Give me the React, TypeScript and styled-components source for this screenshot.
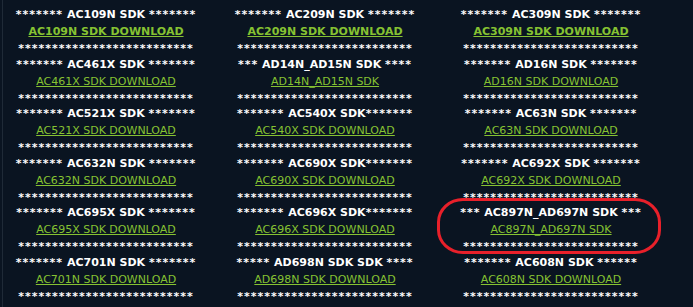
import styled, { createGlobalStyle } from 'styled-components';

const GlobalStyle = createGlobalStyle`
    html, body {
        margin: 0;
        padding: 0;
        background: #0a1421;
    }
`;

const Page = styled.div`
    position: relative;
    width: 693px;
    height: 307px;
    overflow: hidden;
    background: #0a1421;
    font-family: "DejaVu Sans", Verdana, sans-serif;
    font-size: 11px;
`;

const Frame = styled.div`
    margin-left: 2px;
    border-left: 1px solid #1f2a37;
    height: 100%;
    box-sizing: border-box;
    padding-top: 7px;
`;

const Grid = styled.div`
    display: grid;
    grid-template-columns: 206px 232px 220px;
`;

const Cell = styled.div`
    display: flex;
    flex-direction: column;
    align-items: center;
    white-space: pre;
`;

const Title = styled.div`
    color: #ffffff;
    font-weight: bold;
    line-height: 16px;
`;

const Asterisks = styled.span`
    letter-spacing: 1px;
`;

const Link = styled.a<{ $bold?: boolean }>`
    color: #86c232;
    font-weight: ${(p) => (p.$bold ? 'bold' : 'normal')};
    line-height: 18px;
    text-decoration: underline;
    cursor: pointer;
`;

const Stars = styled.div`
    color: #ffffff;
    font-weight: bold;
    letter-spacing: 1px;
    line-height: 15.6px;
`;

const Marker = styled.div`
    position: absolute;
    left: 437px;
    top: 198px;
    width: 224px;
    height: 56px;
    box-sizing: border-box;
    border: 3px solid #e8202a;
    border-radius: 26px / 24px;
    pointer-events: none;
`;

type Sdk = { title: string; link: string; bold?: boolean };

const STAR_LINE = '**************************';

const rows: Sdk[][] = [
    [
        { title: '******* AC109N SDK *******', link: 'AC109N SDK DOWNLOAD', bold: true },
        { title: '******* AC209N SDK *******', link: 'AC209N SDK DOWNLOAD', bold: true },
        { title: '******* AC309N SDK *******', link: 'AC309N SDK DOWNLOAD', bold: true },
    ],
    [
        { title: '******* AC461X SDK *******', link: 'AC461X SDK DOWNLOAD' },
        { title: '*** AD14N_AD15N SDK ****', link: 'AD14N_AD15N SDK' },
        { title: '******* AD16N SDK *******', link: 'AD16N SDK DOWNLOAD' },
    ],
    [
        { title: '******* AC521X SDK *******', link: 'AC521X SDK DOWNLOAD' },
        { title: '******* AC540X SDK*******', link: 'AC540X SDK DOWNLOAD' },
        { title: '******* AC63N SDK *******', link: 'AC63N SDK DOWNLOAD' },
    ],
    [
        { title: '******* AC632N SDK *******', link: 'AC632N SDK DOWNLOAD' },
        { title: '******* AC690X SDK*******', link: 'AC690X SDK DOWNLOAD' },
        { title: '******* AC692X SDK *******', link: 'AC692X SDK DOWNLOAD' },
    ],
    [
        { title: '******* AC695X SDK *******', link: 'AC695X SDK DOWNLOAD' },
        { title: '******* AC696X SDK*******', link: 'AC696X SDK DOWNLOAD' },
        { title: '*** AC897N_AD697N SDK ***', link: 'AC897N_AD697N SDK' },
    ],
    [
        { title: '******* AC701N SDK *******', link: 'AC701N SDK DOWNLOAD' },
        { title: '***** AD698N SDK SDK ****', link: 'AD698N SDK DOWNLOAD' },
        { title: '******* AC608N SDK ******', link: 'AC608N SDK DOWNLOAD' },
    ],
];

// the star runs are drawn a little wider than the font gives them
function renderTitle(title: string) {
    return title.split(/(\*+)/).filter(Boolean).map((part, i) =>
        part.startsWith('*') ? <Asterisks key={i}>{part}</Asterisks> : part
    );
}

export default function App() {
    return (
        <Page>
            <GlobalStyle />
            <Frame>
                <Grid>
                    {rows.flat().map((sdk) => (
                        <Cell key={sdk.title}>
                            <Title>{renderTitle(sdk.title)}</Title>
                            <Link $bold={sdk.bold}>{sdk.link}</Link>
                            <Stars>{STAR_LINE}</Stars>
                        </Cell>
                    ))}
                </Grid>
            </Frame>
            <Marker />
        </Page>
    );
}
